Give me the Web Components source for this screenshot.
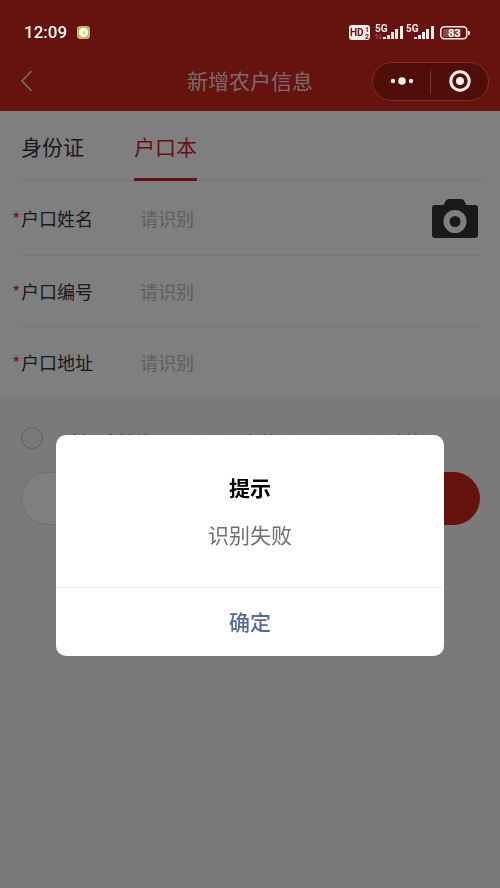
<!DOCTYPE html>
<html lang="zh-CN">
<head>
<meta charset="utf-8">
<meta name="viewport" content="width=device-width, initial-scale=1">
<title>新增农户信息</title>
<style>
html,body{margin:0;min-height:100%}
body{font-family:"Noto Sans CJK SC",sans-serif;background:#f4f4f4;color:#333}
</style>
</head>
<body>
<farmer-page></farmer-page>
<script>
const define = (name, html, setup) => customElements.define(name, class extends HTMLElement {
  constructor() {
    super();
    const t = document.createElement('template');
    t.innerHTML = html;
    this.attachShadow({mode: 'open'}).append(t.content.cloneNode(true));
  }
  connectedCallback() { if (setup) setup(this, this.shadowRoot); }
});

define('status-bar', `
<style>
:host{display:flex;align-items:center;justify-content:space-between;box-sizing:border-box;height:54px;padding:10px 30px 0 24px;color:#fff;position:relative;z-index:2}
.left{display:flex;align-items:center;gap:10px}
time{font:500 17px/24px Roboto,sans-serif}
svg{display:block}
text{font-family:Roboto,sans-serif;font-weight:700}
</style>
<div class="left"><time>12:09</time>
<svg width="13" height="13" viewBox="0 0 13 13"><rect width="13" height="13" rx="3" fill="#bdb47c"/><circle cx="6.5" cy="6.5" r="4.7" fill="#f2f8d0"/><path d="M8.500 5.500 6.300 6.200 8 8" fill="none" stroke="#b9cf84" stroke-width="1.200"/></svg></div>
<svg width="121" height="18" viewBox="0 0 121 18">
<rect x="0" y="2" width="21" height="15" rx="3" fill="#ffeceb"/>
<text x="1" y="13" font-size="10" fill="#66120f">HD</text><text x="16" y="9" font-size="7" fill="#66120f">1</text><text x="16" y="16" font-size="7" fill="#66120f">2</text>
<g fill="#ffeceb"><text x="26" y="9" font-size="10">5G</text><text x="57" y="9" font-size="10">5G</text>
<rect x="34" y="14" width="3" height="2"/><rect x="38" y="12" width="3" height="4"/><rect x="42" y="9" width="3" height="7"/><rect x="46" y="6" width="3" height="10"/><rect x="51" y="3" width="3" height="13"/>
<rect x="65" y="14" width="3" height="2"/><rect x="69" y="12" width="3" height="4"/><rect x="73" y="9" width="3" height="7"/><rect x="77" y="6" width="3" height="10"/><rect x="82" y="3" width="3" height="13"/></g>
<path d="M28 16v-5l-2 2M31 11v5l2-2" fill="none" stroke="#9c5b59" stroke-width="1"/>
<rect x="91.800" y="3.800" width="26" height="12" rx="3.500" fill="none" stroke="#ffeceb" stroke-width="1.500"/>
<rect x="94" y="6" width="18" height="8" rx="1" fill="#8f4a47"/>
<path d="M119 8h1q1 0 1 1v2q0 1-1 1h-1z" fill="#ffeceb"/>
<text x="99" y="14" font-size="11" fill="#fff">83</text>
</svg>`);

define('nav-bar', `
<style>
:host{display:grid;grid-template-columns:1fr auto 1fr;align-items:center;height:54px;padding:0 11px}
h1{margin:0;padding-bottom:2px;font-size:21px;line-height:30px;font-weight:400;color:#fff;opacity:.82}
button{border:0;background:none;padding:0;margin:0;display:grid;place-items:center;cursor:pointer}
.back{justify-self:start;margin-left:8px;width:14px;height:24px}
.capsule{justify-self:end;position:relative;z-index:2;display:flex;align-items:center;width:117px;height:39px;box-sizing:border-box;border:1px solid #7c302d;border-radius:20px;background:#500e0b}
.capsule button{flex:1;height:37px}
.capsule i{width:1px;height:25px;background:#7c302d}
</style>
<button class="back" aria-label="返回"><svg width="14" height="24" viewBox="0 0 14 24"><path d="M12.500 2 3 12l9.500 10" fill="none" stroke="#fff" stroke-opacity=".8" stroke-width="1.700"/></svg></button>
<h1><slot></slot></h1>
<div class="capsule">
<button aria-label="更多"><svg width="24" height="10" viewBox="0 0 24 10" fill="#fff0ee"><circle cx="3" cy="5" r="2.200"/><circle cx="12" cy="5" r="3.800"/><circle cx="21" cy="5" r="2.200"/></svg></button><i></i>
<button aria-label="关闭"><svg width="22" height="22" viewBox="0 0 22 22"><circle cx="11" cy="11" r="9.200" fill="none" stroke="#fff0ee" stroke-width="3"/><circle cx="11" cy="11" r="4" fill="#fff0ee"/></svg></button>
</div>`);

define('doc-tabs', `
<style>
:host{display:block;margin:0 14px 0 21px;border-bottom:1px solid #ececec}
div{display:flex;gap:50px;height:69px}
button{border:0;background:none;padding:2px 0 0;height:70px;font:400 21px/30px "Noto Sans CJK SC",sans-serif;color:#333;border-bottom:3px solid transparent}
button[aria-selected=true]{color:#c9232b;border-bottom-color:#c9232b}
</style>
<div role="tablist"><button role="tab" aria-selected="false">身份证</button><button role="tab" aria-selected="true">户口本</button></div>`);

define('form-row', `
<style>
:host{display:flex;align-items:center;height:70px;margin:0 20px 0 21px;border-bottom:1px solid #f0f0f0}
label{width:128px;margin-left:-9px;flex:none;font-size:18px;line-height:28px;color:#333;display:flex}
b{width:9px;flex:none;font-weight:400;color:#d8333a}
input{flex:1;min-width:0;border:0;background:none;padding:0;font:400 18px/28px "Noto Sans CJK SC",sans-serif;color:#333;outline:0}
input::placeholder{color:#bcbcbc;opacity:1}
</style>
<label for="f"><b>*</b><span></span></label><input id="f" placeholder="请识别"><slot></slot>`,
(h, r) => { r.querySelector('span').textContent = h.getAttribute('label'); });

define('camera-button', `
<style>:host{display:block;margin-right:2px}button{display:block;border:0;background:none;padding:0}svg{display:block}</style>
<button aria-label="拍照识别"><svg width="46" height="40" viewBox="0 0 46 40"><path fill="#333" fill-rule="evenodd" d="M3 7h8.500l2.500-4.500Q15 1 17 1h12q2 0 3 1.500L34.500 7H43q3 0 3 3v27q0 3-3 3H3q-3 0-3-3V10q0-3 3-3zm20 5a11.500 11.500 0 1 0 0 23 11.500 11.500 0 0 0 0-23zm0 6a5.500 5.500 0 1 1 0 11 5.500 5.500 0 0 1 0-11z"/></svg></button>`);

define('submit-area', `
<style>
:host{display:block;padding:25px 20px 0 21px}
.agree{display:flex;align-items:center;gap:20px;height:32px}
input{appearance:none;box-sizing:border-box;width:22px;height:22px;margin:0;flex:none;border:1px solid #c0c0c0;border-radius:50%}
label{padding-top:8px;font-size:18px;line-height:26px;white-space:nowrap}
a{color:#2468b4;text-decoration:none}
.actions{display:flex;margin-top:18px}
.actions button{flex:1;height:53px;border:1px solid #dedede;background:#fff;border-radius:27px 0 0 27px}
.actions button+button{background:#cc241e;border-color:#cc241e;border-radius:0 27px 27px 0}
</style>
<div class="agree"><input type="checkbox" id="a"><label for="a">请阅读并签署《<a href="#">个人服务协议</a>》和《<a href="#">隐私政策</a>》</label></div>
<div class="actions"><button aria-label="取消"></button><button aria-label="提交"></button></div>`);

define('alert-dialog', `
<style>
:host{position:fixed;inset:0;z-index:1;background:rgba(0,0,0,.5)}
section{position:absolute;left:56px;right:56px;top:435px;background:#fff;border-radius:10px;text-align:center;overflow:hidden}
h2{margin:0;padding-top:36px;font-size:21px;line-height:32px;font-weight:700;color:#000}
p{margin:0;padding:15px 20px 37px;font-size:21px;line-height:32px;color:#707070}
button{display:block;width:100%;height:69px;border:0;border-top:1px solid #f2f2f2;background:none;padding:0 0 2px;font:500 21px/32px "Noto Sans CJK SC",sans-serif;color:#576b95}
</style>
<section role="alertdialog" aria-modal="true"><h2><slot name="title"></slot></h2><p><slot></slot></p><button>确定</button></section>`);

define('farmer-page', `
<style>
:host{display:block}
header{background:#cc241e;padding-bottom:3px}
main{background:#fff}
form-row:first-of-type{height:74px}
form-row:last-of-type{border:0}
</style>
<header><status-bar></status-bar><nav-bar>新增农户信息</nav-bar></header>
<main><doc-tabs></doc-tabs><form-row label="户口姓名"><camera-button></camera-button></form-row><form-row label="户口编号"></form-row><form-row label="户口地址"></form-row></main>
<submit-area></submit-area>
<alert-dialog><span slot="title">提示</span>识别失败</alert-dialog>`);
</script>
</body>
</html>
